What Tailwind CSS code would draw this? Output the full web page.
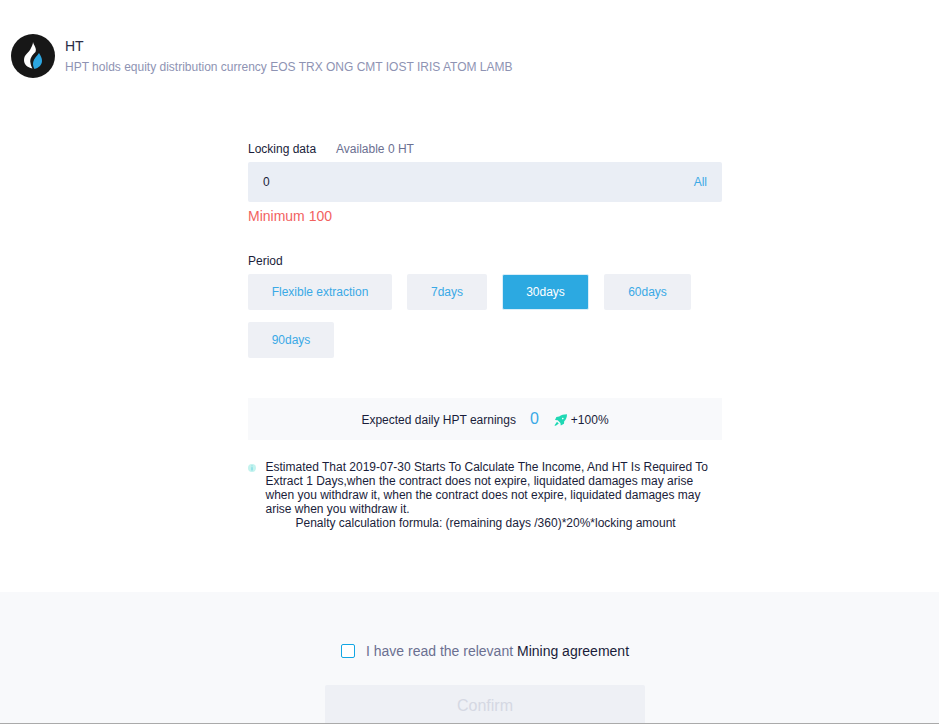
<!DOCTYPE html>
<html lang="en">

<head>
    <meta charset="UTF-8">
    <meta name="viewport" content="width=device-width, initial-scale=1.0">
    <title>Locking</title>
    <script src="https://cdn.jsdelivr.net/npm/@tailwindcss/browser@4"></script>
</head>

<body class="bg-white font-['Liberation_Sans',Arial,sans-serif] text-[12px] text-[#1a1d3a]">
    <div class="h-[724px] w-[939px] overflow-hidden flex flex-col">
        <!-- Coin header -->
        <div class="flex h-[44px] mt-[34px] ml-[11px] shrink-0">
            <svg class="w-[44px] h-[44px] shrink-0" viewBox="0 0 44 44">
                <circle cx="22" cy="22" r="22" fill="#171717" />
                <path d="M22 8C23 12 26 14 24.500 18C21 21 18.500 25 19.500 29C19.800 31 20.500 33 21.500 34.500C16 33.500 13 30 13 26C13 20 18 19 20 14C21 12 22 10 22 8z" fill="#fff" />
                <path d="M28 19C30 22 31 24.500 31 27C31 31 27.500 34 23.500 35C22.300 33 21.700 30.500 22.200 28C23 24.500 26 22 28 19z" fill="#2ca6e0" />
            </svg>
            <div class="ml-[10px] pt-[4px]">
                <div class="text-[14px] leading-[16px] text-[#2a2d45]">HT</div>
                <div class="text-[12px] leading-[14px] mt-[6px] text-[#8e93b3]">HPT holds equity distribution currency EOS TRX ONG CMT IOST IRIS ATOM LAMB</div>
            </div>
        </div>

        <!-- Form -->
        <div class="w-[474px] ml-[248px] mt-[64px] shrink-0">
            <div class="flex h-[14px] leading-[14px]">
                <span>Locking data</span>
                <span class="ml-[20px] text-[#6b7091]">Available 0 HT</span>
            </div>
            <div class="flex items-center justify-between h-[40px] mt-[6px] px-[15px] bg-[#eaeef5] rounded-[2px]">
                <span>0</span>
                <span class="text-[#3aa9e6]">All</span>
            </div>
            <div class="mt-[6px] text-[14px] leading-[16px] text-[#f2625f]">Minimum 100</div>

            <div class="mt-[30px] leading-[14px]">Period</div>
            <div class="flex flex-wrap mt-[6px] gap-x-[15px] gap-y-[12px] text-[#3aa9e6]">
                <button class="h-[36px] w-[144px] bg-[#eef0f5] rounded-[2px]">Flexible extraction</button>
                <button class="h-[36px] w-[80px] bg-[#eef0f5] rounded-[2px]">7days</button>
                <button class="h-[36px] w-[87px] bg-[#2ca9e1] border border-[#d9eef9] rounded-[2px] text-white">30days</button>
                <button class="h-[36px] w-[87px] bg-[#eef0f5] rounded-[2px]">60days</button>
                <button class="h-[36px] w-[86px] bg-[#eef0f5] rounded-[2px]">90days</button>
            </div>

            <!-- Earnings -->
            <div class="flex items-center justify-center h-[42px] mt-[40px] bg-[#f8f9fb]">
                <span class="pt-[1px]">Expected daily HPT earnings</span>
                <span class="ml-[14px] text-[16px] text-[#3aa9e6]">0</span>
                <svg class="w-[13px] h-[12px] ml-[15px] mt-[2px]" viewBox="0 0 13 12">
                    <path d="M13 .2C13 3.500 12 5.500 10.200 7.300L10 9.800 6.800 11.500 6.400 9 3.700 6.300 1 6 2.400 3 5.200 2.600C7.200 .9 9.700 .2 13 .2z" fill="#1fd8b4" />
                    <path d="M3 7.700L4.800 9.500 1.800 11.800.4 11.400z" fill="#1fd8b4" />
                    <circle cx="8.800" cy="4.600" r=".8" fill="#fff" />
                </svg>
                <span class="ml-[4px] pt-[1px]">+100%</span>
            </div>

            <!-- Notice -->
            <div class="flex mt-[20px] leading-[14px]">
                <svg class="w-[8px] h-[8px] mt-[4px] shrink-0" viewBox="0 0 8 8">
                    <circle cx="4" cy="4" r="4" fill="#c4f3ee" />
                    <path d="M4 1.500v.8M4 3.200v3.300" stroke="#5fcfe0" stroke-width=".9" />
                </svg>
                <div class="ml-[9.5px] w-[448px]">
                    <p>Estimated That 2019-07-30 Starts To Calculate The Income, And HT Is Required To Extract 1 Days,when the contract does not expire, liquidated damages may arise when you withdraw it, when the contract does not expire, liquidated damages may arise when you withdraw it.</p>
                    <p class="pl-[30px]">Penalty calculation formula: (remaining days /360)*20%*locking amount</p>
                </div>
            </div>
        </div>

        <!-- Footer -->
        <div class="flex-1 mt-[62px] pl-[31px] bg-[#f8f9fb] overflow-hidden flex flex-col items-center border-b border-[#aaaaaa]">
            <label class="flex items-center mt-[51px] text-[14px] leading-[16px] text-[#6b7091]">
                <span class="w-[14px] h-[14px] border border-[#12a6e4] rounded-[2px] bg-white"></span>
                <span class="ml-[11px]">I have read the relevant <span class="text-[#1a1d3a]">Mining agreement</span></span>
            </label>
            <button class="w-[320px] h-[40px] pt-[2px] mt-[26px] shrink-0 bg-[#eef0f5] rounded-[2px] text-[16px] text-[#d5d8e3]">Confirm</button>
        </div>
    </div>
</body>

</html>
